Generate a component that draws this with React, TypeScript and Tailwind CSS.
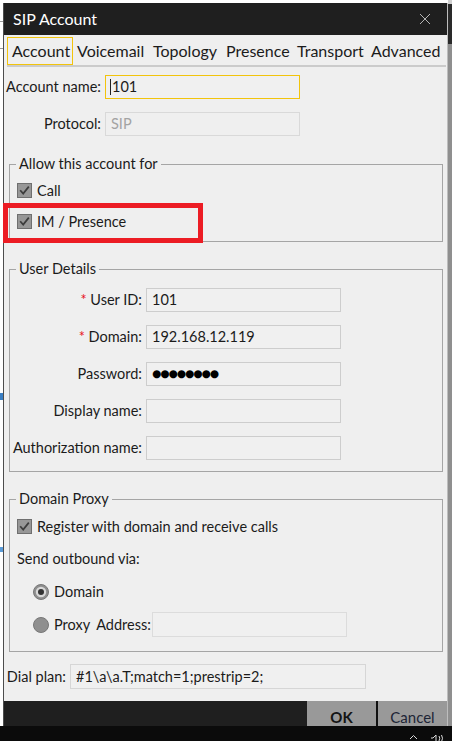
import React from "react";

function CheckBox() {
  return (
    <svg width="15" height="15" viewBox="0 0 15 15" className="shrink-0">
      <rect x="0.5" y="0.5" width="14" height="14" fill="#979797" stroke="#6f6f6f" />
      <path d="M3.2 7.2 L6.2 10.6 L11.8 3.6" fill="none" stroke="#3c3c3c" strokeWidth="1.7" />
    </svg>
  );
}

function Radio({ on }: { on?: boolean }) {
  return (
    <svg width="16" height="16" viewBox="0 0 16 16" className="shrink-0">
      <circle cx="8" cy="8" r="7.5" fill="#8f8f8f" stroke="#777777" strokeWidth="1" />
      {on && <circle cx="8" cy="8" r="5.2" fill="#d9d9d9" />}
      {on && <circle cx="8" cy="8" r="3" fill="#333333" />}
    </svg>
  );
}

function Input({ value, className = "" }: { value?: string; className?: string }) {
  return (
    <div
      className={`h-[24px] border border-[#cdcdcd] bg-[#f0f0f0] pl-[5px] flex items-center whitespace-nowrap text-[#1b1b1b] ${className}`}
    >
      {value}
    </div>
  );
}

const tabs = [
  { label: "Account", w: "w-[66px]", active: true },
  { label: "Voicemail", w: "w-[76px]" },
  { label: "Topology", w: "w-[73px]" },
  { label: "Presence", w: "w-[71px]" },
  { label: "Transport", w: "w-[74px]" },
  { label: "Advanced", w: "w-[77px]" },
];

const userRows = [
  { label: "User ID:", value: "101", req: true },
  { label: "Domain:", value: "192.168.12.119", req: true },
  { label: "Password:", value: "pw" },
  { label: "Display name:", value: "" },
  { label: "Authorization name:", value: "" },
];

export default function App() {
  return (
    <div className="relative w-[452px] h-[741px] overflow-hidden bg-white font-['Lato',sans-serif] text-[14.5px] text-[#1b1b1b]">
      <div className="flex h-full">
        {/* desktop behind, left edge */}
        <div className="w-[3px] shrink-0 flex flex-col">
          <div className="h-[21px]" />
          <div className="h-px bg-[#9a9a9a]" />
          <div className="h-[26px]" />
          <div className="h-px bg-[#9a9a9a]" />
          <div className="h-[344px]" />
          <div className="h-[7px] bg-[#3a7fc4]" />
          <div className="h-[147px]" />
          <div className="h-[5px] bg-[#5a9bd8]" />
        </div>

        {/* dialog */}
        <div className="w-[445px] shrink-0 flex flex-col pt-[3px]">
          <div className="flex-1 flex flex-col bg-[#efefef] border-l border-[#4d4d4d] border-r border-r-[#bdbdbd]">
            {/* title bar */}
            <div className="h-[32px] bg-[#1f1f1f] flex items-center justify-between pl-[9px] pr-[16px]">
              <span className="text-white text-[16px]">SIP Account</span>
              <svg width="12" height="12" viewBox="0 0 12 12">
                <path d="M1 1 L11 11 M11 1 L1 11" stroke="#b5b5b5" strokeWidth="1" />
              </svg>
            </div>

            {/* tabs */}
            <div className="pt-[2px] pl-[3px] pr-[1px]">
              <div className="flex h-[28px] text-[16px]">
                {tabs.map((t) => (
                  <div
                    key={t.label}
                    className={`${t.w} shrink-0 h-full flex items-center whitespace-nowrap pl-[4px] ${
                      t.active ? "border border-[#f2c40c] pl-[3px]" : ""
                    }`}
                  >
                    {t.label}
                  </div>
                ))}
              </div>
              <div className="h-[2px] bg-[#cbcbcb]" />
            </div>

            {/* account */}
            <div className="flex items-center mt-[8px]">
              <div className="w-[97px] text-right whitespace-nowrap">Account name:</div>
              <div className="ml-[4px] w-[195px] h-[24px] border border-[#f2c40c] bg-[#f0f0f0] pl-[4px] flex items-center">
                <span className="w-px h-[16px] bg-[#222] mr-px" />
                101
              </div>
            </div>
            <div className="flex items-center mt-[13px]">
              <div className="w-[97px] text-right">Protocol:</div>
              <div className="ml-[4px] w-[195px] h-[24px] border border-[#d9d9d9] bg-[#efefef] pl-[5px] flex items-center text-[#a3a3a3]">
                SIP
              </div>
            </div>

            {/* allow */}
            <fieldset className="mt-[18px] ml-[5px] w-[434px] border border-[#a5a5a5] pb-[4px]">
              <legend className="ml-[6px] px-[3px] leading-[20px]">Allow this account for</legend>
              <div className="pt-px">
                <div className="h-[31px] flex items-center gap-[5px] pl-[7px]">
                  <CheckBox />
                  <span>Call</span>
                </div>
                <div className="h-[31px] flex items-center gap-[5px] pl-[7px]">
                  <CheckBox />
                  <span>IM / Presence</span>
                </div>
              </div>
            </fieldset>

            {/* user details */}
            <fieldset className="mt-[17px] ml-[5px] w-[434px] border border-[#a5a5a5] pb-[11px]">
              <legend className="ml-[6px] px-[3px] leading-[20px]">User Details</legend>
              <div className="pt-[9px] flex flex-col gap-[13px]">
                {userRows.map((r) => (
                  <div key={r.label} className="flex items-center">
                    <div className="w-[132px] text-right whitespace-nowrap">
                      {r.req && <span className="text-[#e81123]">* </span>}
                      {r.label}
                    </div>
                    {r.value === "pw" ? (
                      <div className="ml-[4px] w-[195px] h-[24px] border border-[#cdcdcd] bg-[#f0f0f0] pl-[5px] flex items-center text-[10.5px] tracking-[-0.9px] text-black font-['DejaVu_Sans',sans-serif]">
                        ●●●●●●●●
                      </div>
                    ) : (
                      <Input value={r.value} className="ml-[4px] w-[195px]" />
                    )}
                  </div>
                ))}
              </div>
            </fieldset>

            {/* domain proxy */}
            <fieldset className="mt-[17px] ml-[5px] w-[434px] border border-[#a5a5a5] pb-[14px]">
              <legend className="ml-[6px] px-[3px] leading-[20px]">Domain Proxy</legend>
              <div className="h-[35px] flex items-center gap-[5px] pl-[7px]">
                <CheckBox />
                <span>Register with domain and receive calls</span>
              </div>
              <div className="h-[30px] flex items-center pl-[7px]">Send outbound via:</div>
              <div className="h-[36px] flex items-center gap-[5px] pl-[23px]">
                <Radio on />
                <span>Domain</span>
              </div>
              <div className="mt-[2px] flex items-center pl-[23px]">
                <div className="w-[119px] shrink-0 flex items-center whitespace-nowrap">
                  <Radio />
                  <span className="ml-[5px]">Proxy</span>
                  <span className="ml-[6px]">Address:</span>
                </div>
                <Input className="w-[195px] h-[25px] border-[#dcdcdc]" />
              </div>
            </fieldset>

            {/* dial plan */}
            <div className="flex items-center mt-[12px]">
              <div className="w-[62px] text-right whitespace-nowrap">Dial plan:</div>
              <Input
                value="#1\a\a.T;match=1;prestrip=2;"
                className="ml-[4px] w-[296px] h-[25px] pl-[5px] border-[#d6d6d6]"
              />
            </div>

            {/* buttons */}
            <div className="mt-[12px] flex-1 bg-[#1f1f1f] flex justify-end">
              <div className="w-[69px] bg-[#999999] flex justify-center pt-[5px] font-bold text-[15px] text-[#141414]">
                OK
              </div>
              <div className="w-[2px] bg-[#111]" />
              <div className="w-[69px] bg-[#999999] flex justify-center pt-[5px] text-[15px] text-[#1d2536]">
                Cancel
              </div>
            </div>
          </div>
        </div>

        {/* desktop behind, right edge */}
        <div className="flex-1 flex flex-col bg-[#8f8f8f]">
          <div className="h-[4px] bg-[#d0d0d0]" />
          <div className="h-[40px] bg-[#2a2a2a]" />
        </div>
      </div>

      {/* taskbar */}
      <div className="absolute left-0 right-0 bottom-0 h-[15px] bg-[#0b0b0b] flex items-start justify-end pr-[8px] gap-[12px] pt-[8px]">
        <svg width="9" height="6" viewBox="0 0 9 6">
          <path d="M1 5 L4.5 1.5 L8 5" fill="none" stroke="#d8d8d8" strokeWidth="1" />
        </svg>
        <svg width="14" height="8" viewBox="0 0 14 8">
          <path d="M1 4 H3 L6 1 V8" fill="none" stroke="#d8d8d8" strokeWidth="1" />
          <path d="M9 2 Q10.5 4 9 7 M11.5 1 Q13.5 4 11.5 8" fill="none" stroke="#d8d8d8" strokeWidth="1" />
        </svg>
      </div>

      {/* annotation */}
      <div className="absolute left-[3px] top-[203px] w-[200px] h-[40px] border-[5px] border-[#ec1c24]" />
    </div>
  );
}
